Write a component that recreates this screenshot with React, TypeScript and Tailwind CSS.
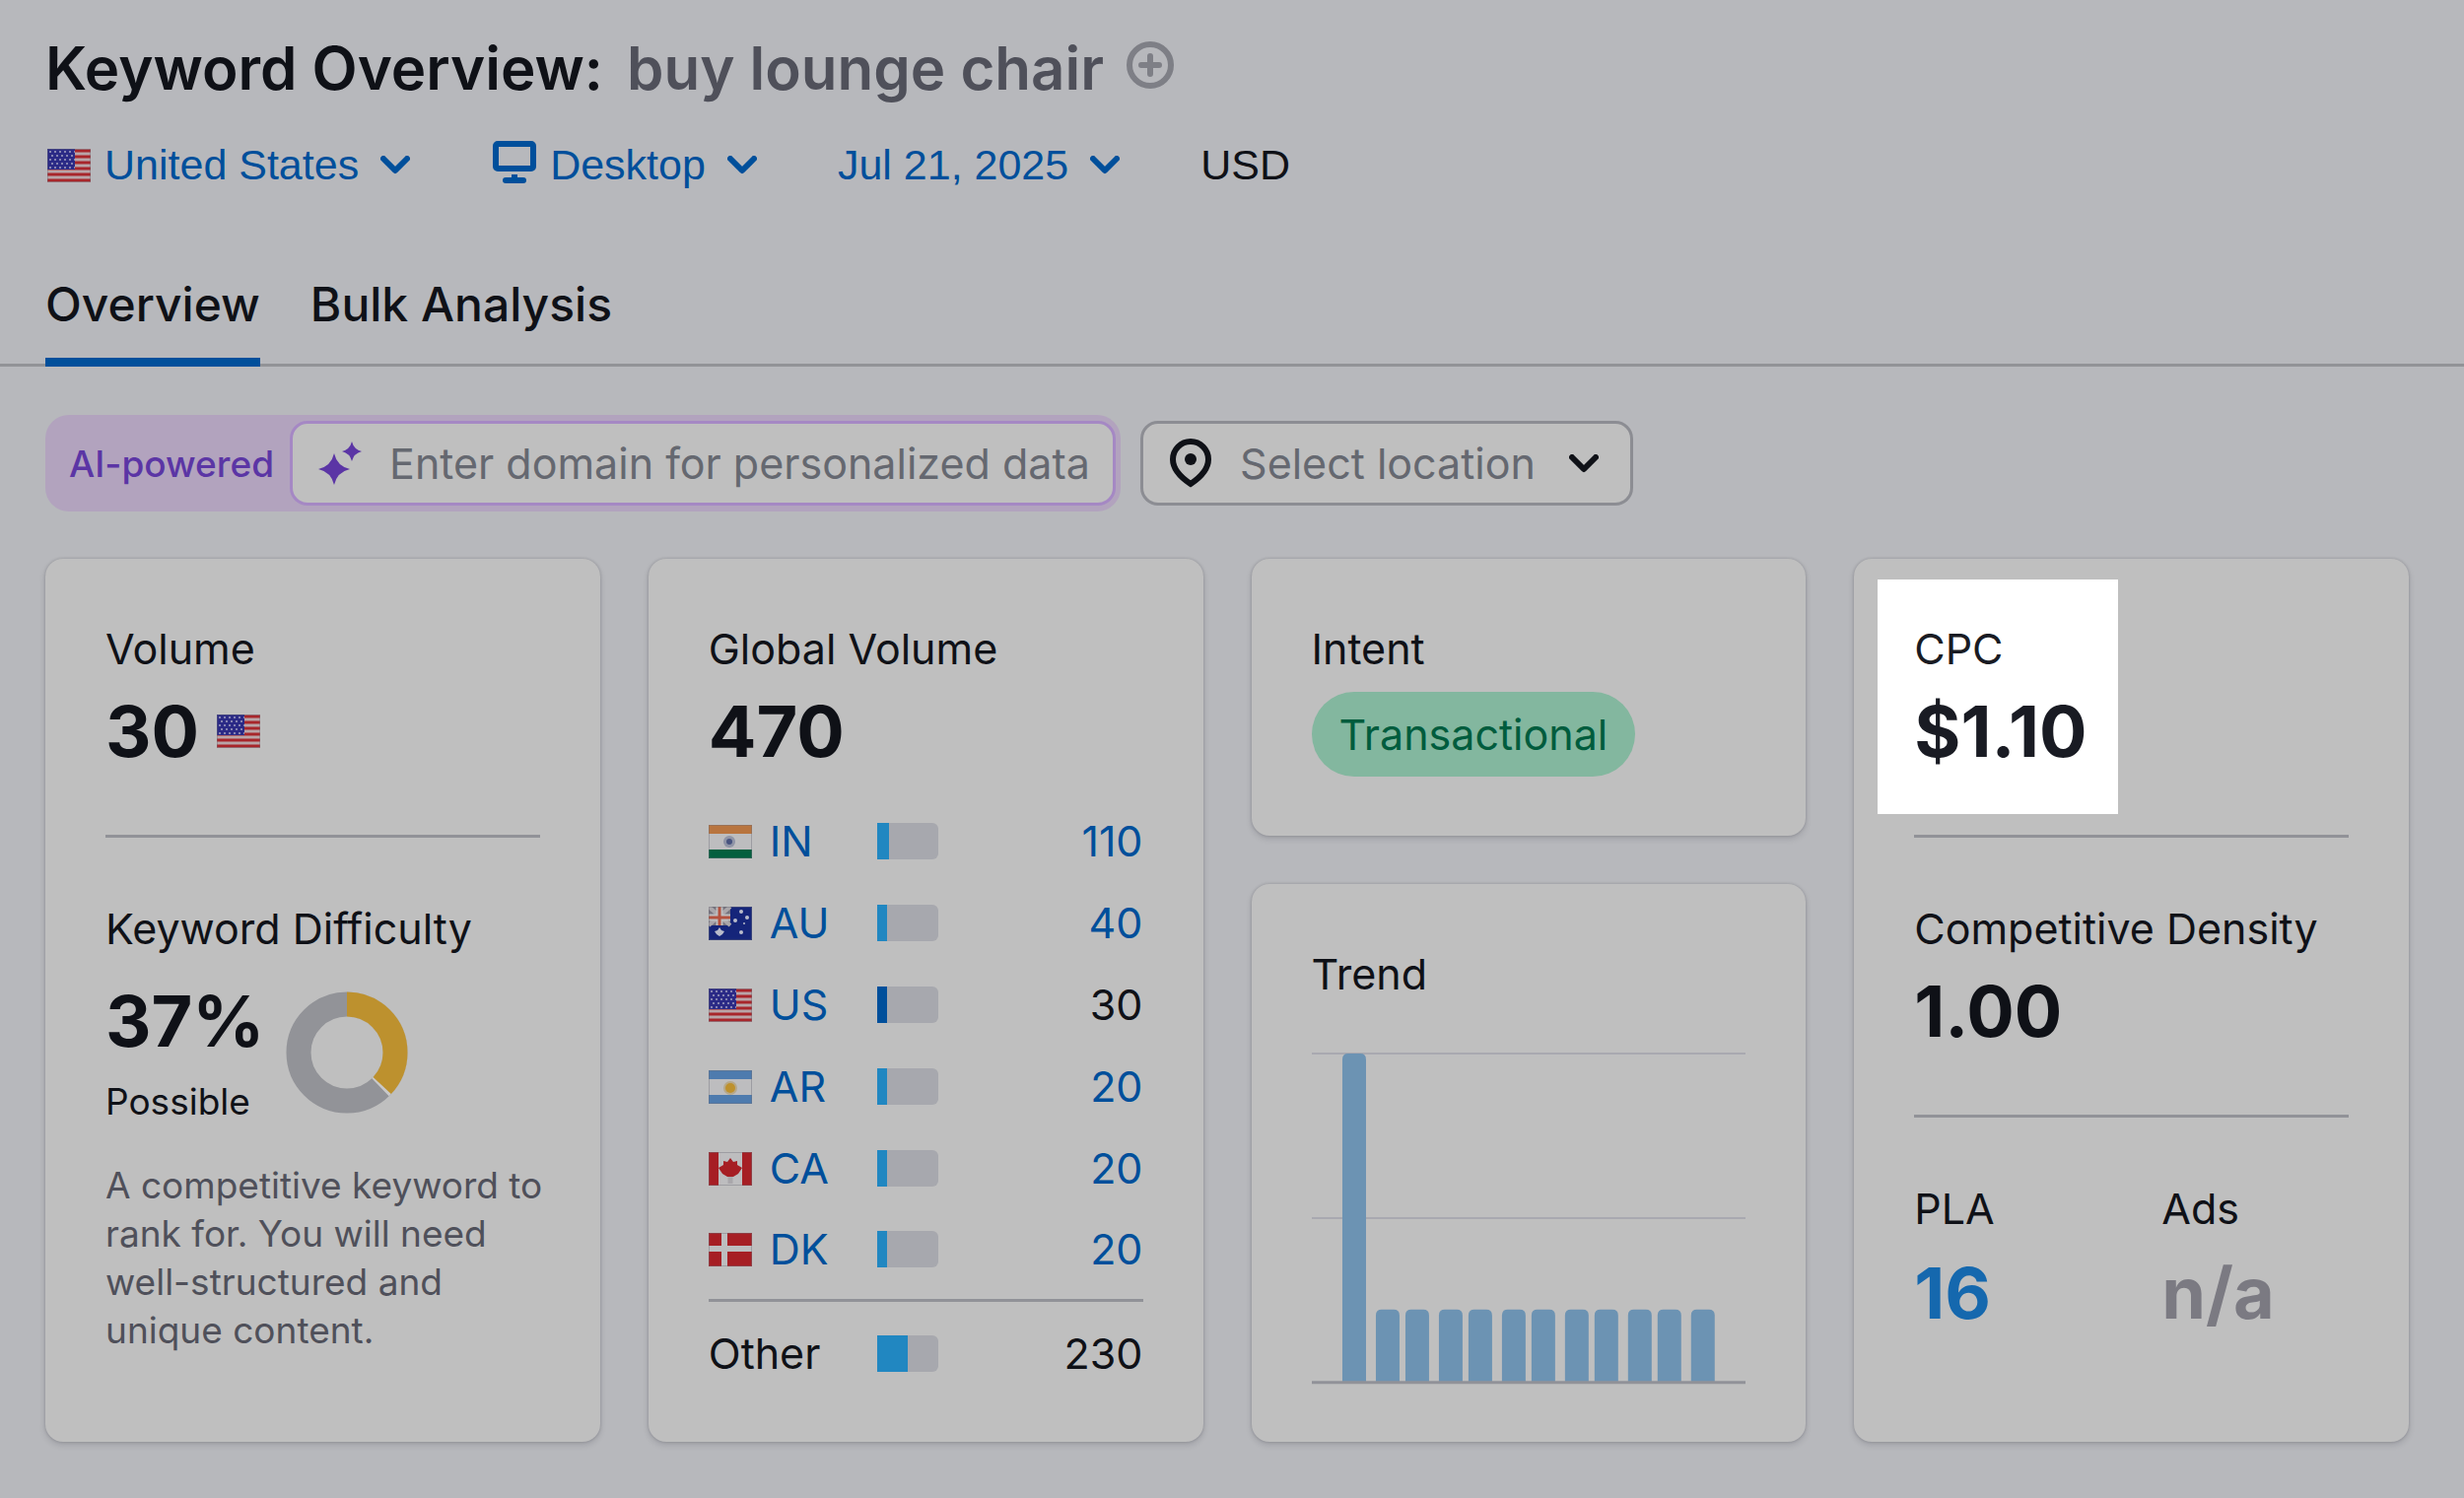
import { ReactNode } from "react";

const BLUE_LINK = "text-[#004f9b]";

const countries = [
  { code: "IN", value: "110", share: 20 },
  { code: "AU", value: "40", share: 16 },
  { code: "US", value: "30", share: 16, current: true },
  { code: "AR", value: "20", share: 16 },
  { code: "CA", value: "20", share: 16 },
  { code: "DK", value: "20", share: 16 },
];

const trend = [334, 74, 74, 74, 74, 74, 74, 74, 74, 74, 74, 74];

function FlagArt({ code }: { code: string }) {
  switch (code) {
    case "IN":
      return (
        <>
          <rect width="44" height="34" fill="#bdbdbf" />
          <rect width="44" height="9" fill="#b8743f" />
          <rect y="25" width="44" height="9" fill="#045f3e" />
          <circle cx="21" cy="17" r="6" fill="#8f94a6" />
          <circle cx="21" cy="17" r="3" fill="#47537f" />
        </>
      );
    case "AU":
      return (
        <>
          <rect width="44" height="34" fill="#15257a" />
          <rect width="22" height="19" fill="#77747f" />
          <path d="M0 0 22 19M22 0 0 19" stroke="#aaa6aa" strokeWidth="4" />
          <path d="M11 0v19M0 11h22" stroke="#bdbdbf" strokeWidth="7" />
          <path d="M11 0v19M0 11h22" stroke="#b5523f" strokeWidth="3" />
          <g fill="#b9bccb">
            <path d="m11 21 2 3 3 1-2 3-3 2-3-2-2-3 3-1z" />
            <circle cx="33" cy="5" r="2" />
            <circle cx="27" cy="14" r="2" />
            <circle cx="39" cy="11" r="2" />
            <circle cx="36" cy="17" r="1" />
            <circle cx="33" cy="26" r="2" />
          </g>
        </>
      );
    case "AR":
      return (
        <>
          <rect width="44" height="34" fill="#bdbdbf" />
          <rect width="44" height="9" fill="#4e7bae" />
          <rect y="25" width="44" height="9" fill="#4e7bae" />
          <circle cx="22" cy="18" r="7" fill="#b6a88a" />
          <circle cx="22" cy="18" r="5" fill="#bd912e" />
        </>
      );
    case "CA":
      return (
        <>
          <rect width="44" height="34" fill="#bdbdbf" />
          <rect width="10" height="34" fill="#a61e24" />
          <rect x="34" width="10" height="34" fill="#a61e24" />
          <path d="M22 24v8" stroke="#a9a7ab" strokeWidth="5" />
          <path
            d="m22 6 3 4 4-1v4l5 3-4 6-5 3h-6l-5-3-4-6 5-3V9l4 1z"
            fill="#a61e24"
          />
        </>
      );
    case "DK":
      return (
        <>
          <rect width="44" height="34" fill="#a61e24" />
          <path d="M16 0v34M0 16h44" stroke="#bdbdbf" strokeWidth="6" />
        </>
      );
    default:
      return (
        <>
          <rect width="44" height="34" fill="#b9a5a8" />
          <path
            d="M0 2h44M0 8h44M0 14h44M0 20h44M0 26h44M0 32h44"
            stroke="#a8262b"
            strokeWidth="3"
          />
          <rect width="28" height="21" fill="#2b2a86" />
          <path
            d="M2 3h26M4 7h24M2 11h26M4 15h24M2 19h26"
            stroke="#8583b2"
            strokeWidth="2"
            strokeDasharray="2 3"
          />
        </>
      );
  }
}

function Flag({ code }: { code: string }) {
  return (
    <svg viewBox="0 0 44 34" className="h-[34px] w-11 shrink-0" aria-hidden="true">
      <FlagArt code={code} />
      <rect width="44" height="34" fill="none" stroke="#6f6f77" strokeOpacity="0.4" strokeWidth="2" />
    </svg>
  );
}

function Chevron() {
  return (
    <svg viewBox="0 0 30 19" className="h-[19px] w-[30px] shrink-0" aria-hidden="true">
      <path
        d="m3 3 12 12L27 3"
        fill="none"
        stroke="currentColor"
        strokeWidth="6"
        strokeLinecap="round"
        strokeLinejoin="round"
      />
    </svg>
  );
}

function Filter({ icon, label }: { icon?: ReactNode; label: string }) {
  return (
    <button type="button" className={`flex items-center ${BLUE_LINK}`}>
      {icon}
      <span className="mr-[22px]">{label}</span>
      <Chevron />
    </button>
  );
}

function Card({ className = "", children }: { className?: string; children: ReactNode }) {
  return (
    <section
      className={`rounded-[18px] bg-[#bfbfbf] px-[61px] shadow-[0_0_3px_rgba(20,22,35,0.2),0_3px_6px_rgba(20,22,35,0.15)] ${className}`}
    >
      {children}
    </section>
  );
}

function Label({ children }: { children: ReactNode }) {
  return <h2 className="text-[43px] leading-[61px]">{children}</h2>;
}

function Figure({ children, color = "" }: { children: ReactNode; color?: string }) {
  return <p className={`text-[72px] leading-[86px] font-bold ${color}`}>{children}</p>;
}

function Divider() {
  return <hr className="border-t-[3px] border-[#919298]" />;
}

function Meter({ share, dark = false }: { share: number; dark?: boolean }) {
  return (
    <div className="h-[37px] w-[62px] overflow-hidden rounded-r-md bg-[#a7a8ae]">
      <div
        className={dark ? "h-full bg-[#004f9b]" : "h-full bg-[#2187c1]"}
        style={{ width: `${share}%` }}
      />
    </div>
  );
}

function Donut() {
  return (
    <svg viewBox="0 0 124 124" className="h-[124px] w-[124px]" role="img" aria-label="37%">
      <g fill="none" strokeWidth="25" transform="rotate(-90 62 62)">
        <circle cx="62" cy="62" r="49" stroke="#929398" />
        <circle cx="62" cy="62" r="49" stroke="#c9c9c9" pathLength="100" strokeDasharray="37.8 100" />
        <circle cx="62" cy="62" r="49" stroke="#bd912e" pathLength="100" strokeDasharray="37 100" />
      </g>
    </svg>
  );
}

function TrendChart() {
  return (
    <svg viewBox="0 0 441 338" className="mt-12 block w-full" role="img" aria-label="Trend">
      <path d="M0 2h441M0 169h441" stroke="#a9a9b0" strokeWidth="2" />
      {trend.map((h, i) => {
        // bars alternate between a wide and a narrow gap
        const x = 31 + Math.ceil(i / 2) * 34 + Math.floor(i / 2) * 30;
        return (
          <path
            key={i}
            d={`M${x} 336v${-(h - 6)}q0-6 6-6h12q6 0 6 6v${h - 6}z`}
            fill="#6c93b3"
          />
        );
      })}
      <path d="M0 336h441" stroke="#919298" strokeWidth="3" />
    </svg>
  );
}

export default function App() {
  return (
    <main className="min-h-screen bg-[#b7b8bc] pb-[52px] font-['Inter',sans-serif] text-[#0f1117]">
      <header className="border-b-[3px] border-[#929397] pl-[46px]">
        <div className="flex items-center pt-8">
          <h1 className="text-[60px] leading-[74px] font-semibold">
            Keyword Overview:
            <span className="ml-6 text-[#4f505a]">buy lounge chair</span>
          </h1>
          <button type="button" aria-label="Add keyword" className="mb-[6px] ml-[22px] text-[#7e7f86]">
            <svg viewBox="0 0 50 50" className="h-[50px] w-[50px]" fill="none" stroke="currentColor">
              <circle cx="25" cy="25" r="21" strokeWidth="6" />
              <path d="M25 16v18M16 25h18" strokeWidth="6" strokeLinecap="round" />
            </svg>
          </button>
        </div>

        <div className="mt-[31px] flex items-center font-['Liberation_Sans',Arial,sans-serif] text-[43px] leading-[61px]">
          <Filter icon={<span className="mr-[14px] ml-[2px]"><Flag code="US" /></span>} label="United States" />
          <div className="ml-[84px]">
            <Filter
              icon={
                <svg viewBox="0 0 44 50" className="mr-[14px] h-[50px] w-11" aria-hidden="true">
                  <rect x="3" y="3" width="38" height="25" rx="2" fill="none" stroke="currentColor" strokeWidth="6" />
                  <path d="M22 34v6" stroke="currentColor" strokeWidth="6" />
                  <path d="M13 40h18" stroke="currentColor" strokeWidth="6" strokeLinecap="round" />
                </svg>
              }
              label="Desktop"
            />
          </div>
          <div className="ml-[82px]">
            <Filter label="Jul 21, 2025" />
          </div>
          <span className="ml-[82px]">USD</span>
        </div>

        <nav className="-mb-[3px] mt-[80px] flex gap-[51px] text-[48px] leading-[61px] font-medium">
          <a href="#overview" className="border-b-[9px] border-[#004f9b] pb-[24px]">Overview</a>
          <a href="#bulk" className="pb-[24px]">Bulk Analysis</a>
        </nav>
      </header>

      <div className="mt-[49px] flex items-center pl-[46px]">
        <label className="flex items-center rounded-3xl bg-[#b2a3be] p-[6px] pr-[5px] pl-6">
          <span className="mr-4 text-[37px] leading-[49px] font-medium text-[#5b35a5]">AI-powered</span>
          <span className="flex h-[86px] items-center rounded-[18px] border-[3px] border-[#a588c4] bg-[#bfbfbf] pl-[26px]">
            <svg viewBox="0 0 44 44" className="h-11 w-11 text-[#5b35a5]" fill="currentColor" aria-hidden="true">
              <path d="M16 12q3 13 16 16-13 3-16 16-3-13-16-16 13-3 16-16z" />
              <path d="M34 0q2 8 10 10-8 2-10 10-2-8-10-10 8-2 10-10z" />
            </svg>
            <input
              type="text"
              placeholder="Enter domain for personalized data"
              className="ml-7 w-[734px] bg-transparent text-[43px] outline-none placeholder:text-[#656870]"
            />
          </span>
        </label>
        <button
          type="button"
          className="ml-5 flex h-[86px] items-center rounded-[18px] border-[3px] border-[#8c8d93] bg-[#bfbfbf] pr-8 pl-[27px]"
        >
          <svg viewBox="0 0 42 50" className="h-[50px] w-[42px]" fill="none" stroke="currentColor" aria-hidden="true">
            <path d="M21 46C12 40 3 32 3 21a18 18 0 0 1 36 0c0 11-9 19-18 25z" strokeWidth="6" />
            <circle cx="21" cy="21" r="6" fill="currentColor" stroke="none" />
          </svg>
          <span className="mr-[34px] ml-[29px] text-[43px] leading-[61px] text-[#656870]">Select location</span>
          <Chevron />
        </button>
      </div>

      <div className="mt-12 grid grid-cols-4 gap-[49px] pr-14 pl-[46px]">
        <Card className="pt-[61px] pb-[89px]">
          <Label>Volume</Label>
          <div className="mt-[10px] flex items-center gap-[18px]">
            <Figure>30</Figure>
            <Flag code="US" />
          </div>
          <div className="my-[62px]">
            <Divider />
          </div>
          <Label>Keyword Difficulty</Label>
          <div className="mt-5 flex items-center gap-[22px]">
            <div>
              <Figure>37%</Figure>
              <p className="mt-[14px] text-[37px] leading-[49px]">Possible</p>
            </div>
            <Donut />
          </div>
          <p className="mt-9 -mr-3 text-[37px] leading-[49px] text-[#4f505a]">
            A competitive keyword to rank for. You will need well-structured and unique content.
          </p>
        </Card>

        <Card className="pt-[61px]">
          <Label>Global Volume</Label>
          <div className="mt-[10px]">
            <Figure>470</Figure>
          </div>
          <table className="mt-[27px] w-full text-[43px] leading-[61px]">
            <tbody>
              {countries.map((c) => (
                <tr key={c.code} className="h-[83px] last:h-[92px] last:[&>td]:pb-[9px]">
                  <td className="w-[171px]">
                    <a href={`#${c.code}`} className={`flex items-center gap-[18px] ${BLUE_LINK}`}>
                      <Flag code={c.code} />
                      {c.code}
                    </a>
                  </td>
                  <td>
                    <Meter share={c.share} dark={c.current} />
                  </td>
                  <td className="text-right">
                    {c.current ? c.value : <a href={`#${c.code}`} className={BLUE_LINK}>{c.value}</a>}
                  </td>
                </tr>
              ))}
            </tbody>
            <tfoot>
              <tr className="h-[107px] border-t-[3px] border-[#919298]">
                <td>Other</td>
                <td>
                  <Meter share={51} />
                </td>
                <td className="text-right">230</td>
              </tr>
            </tfoot>
          </table>
        </Card>

        <div className="flex flex-col gap-[49px]">
          <Card className="pt-[61px] pb-[60px]">
            <Label>Intent</Label>
            <span className="mt-[13px] inline-block rounded-full bg-[#83b79f] px-7 text-[43px] leading-[86px] text-[#005c3d]">
              Transactional
            </span>
          </Card>
          <Card className="flex-1 pt-[61px]">
            <Label>Trend</Label>
            <TrendChart />
          </Card>
        </div>

        <Card className="pt-[21px]">
          <div className="-ml-[37px] w-[244px] bg-white pt-10 pb-[41px] pl-[37px] text-[#191b23]">
            <Label>CPC</Label>
            <div className="mt-[10px]">
              <Figure>$1.10</Figure>
            </div>
          </div>
          <div className="mt-[21px] mb-[62px]">
            <Divider />
          </div>
          <Label>Competitive Density</Label>
          <div className="mt-[10px]">
            <Figure>1.00</Figure>
          </div>
          <div className="my-[62px]">
            <Divider />
          </div>
          <div className="grid grid-cols-[251px_1fr]">
            <div>
              <Label>PLA</Label>
              <div className="mt-3">
                <Figure color="text-[#1568ae]"><a href="#pla">16</a></Figure>
              </div>
            </div>
            <div>
              <Label>Ads</Label>
              <div className="mt-3">
                <Figure color="text-[#7b7a82]">n/a</Figure>
              </div>
            </div>
          </div>
        </Card>
      </div>
    </main>
  );
}
